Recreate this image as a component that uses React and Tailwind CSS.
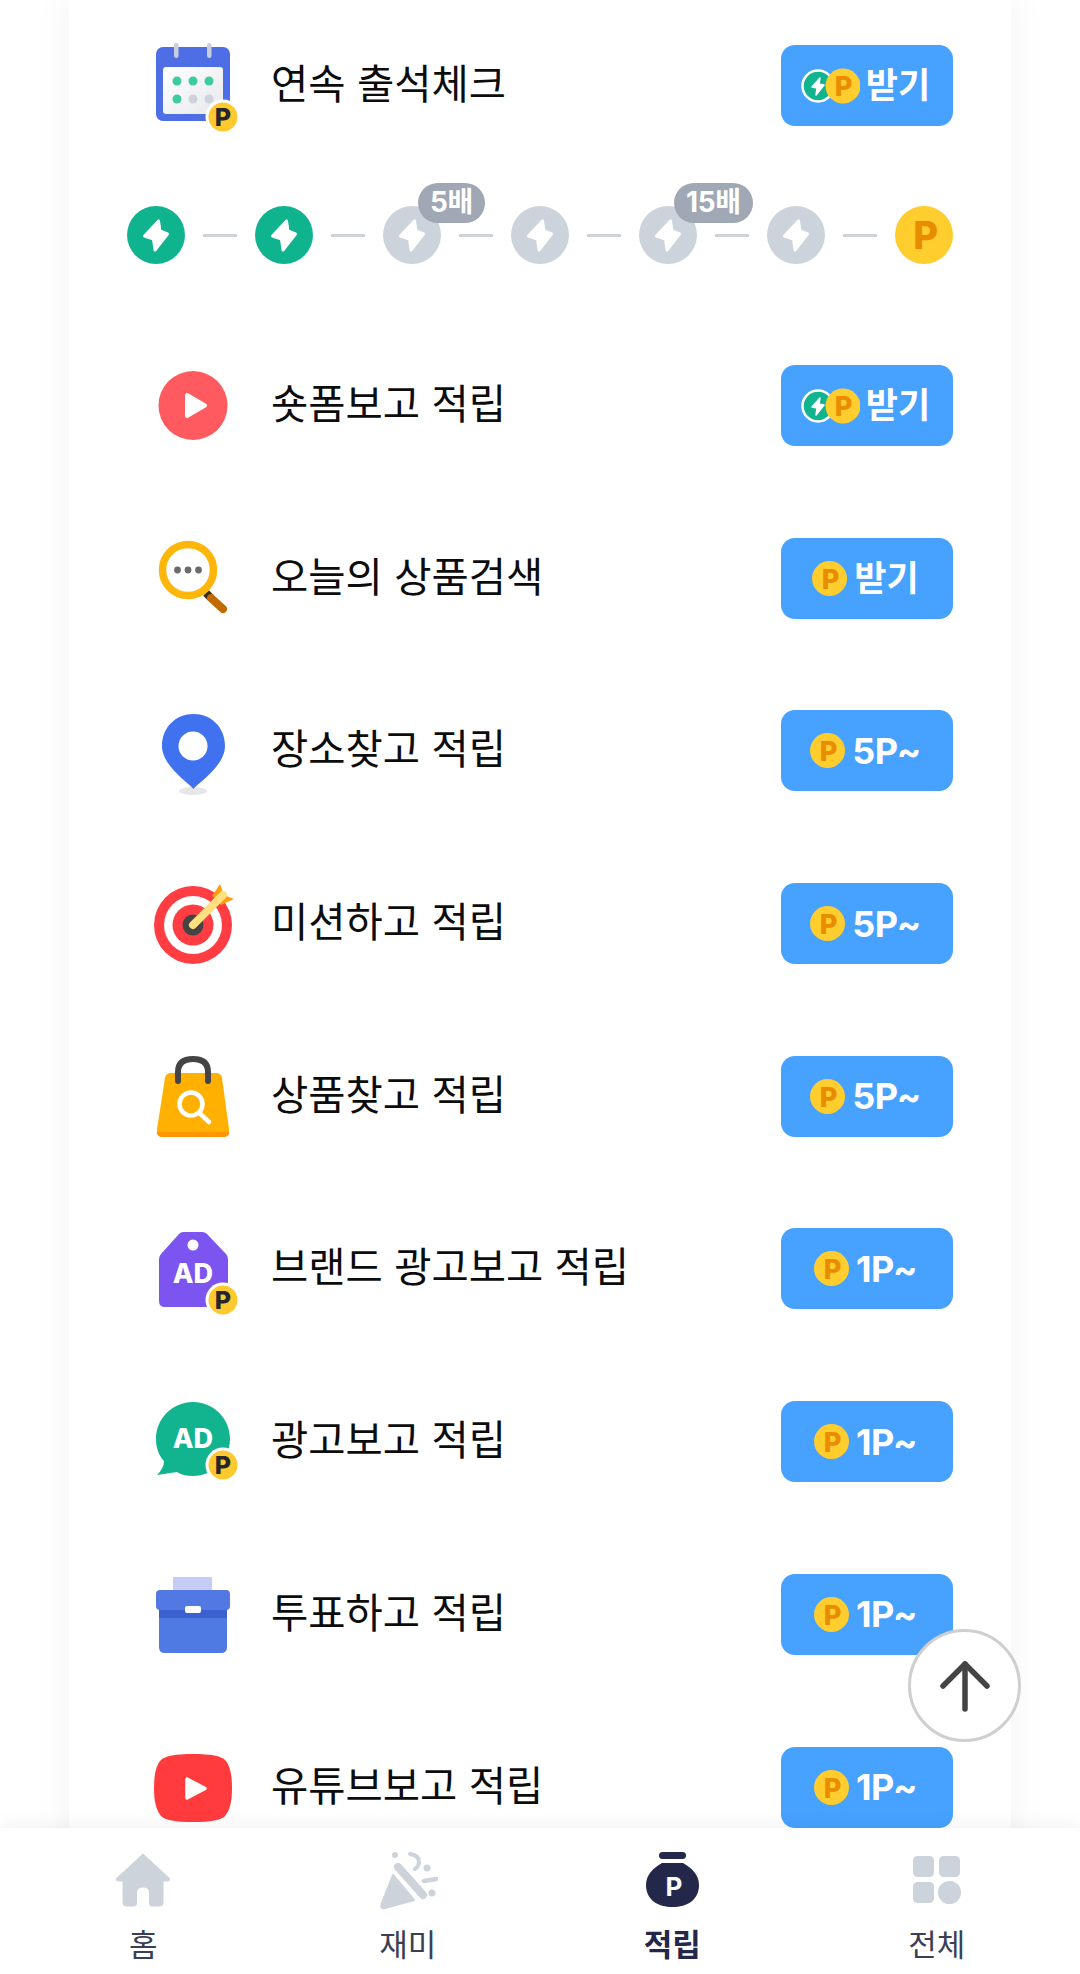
// 적립 탭: 적립 미션 목록 + 하단 내비게이션
import React from 'react';

const BOLT = '31.5,15 17.5,30 26.5,33 28,44 40.5,28 33,25';

const Coin = ({ size = 35, pSize = 27, baseline = 27.5 }) => (
    <svg width={size} height={size} viewBox="0 0 35 35" className="shrink-0">
        <circle cx="17.5" cy="17.5" r="17.5" fill="#ffcd2e" />
        <text x="18.5" y={baseline} textAnchor="middle" fontSize={pSize} fontWeight="800" fontFamily="Inter" fill="#e88c00">P</text>
    </svg>
);

const DoubleCoin = () => (
    <svg width="59" height="36" viewBox="0 0 59 36" className="shrink-0">
        <circle cx="17" cy="18" r="15.5" fill="#12b48f" stroke="#fff" strokeWidth="2.5" />
        <polygon points="19,10 11,19 16,20 15,27 23,17 18,16" fill="#fff" stroke="#fff" strokeWidth="1.5" strokeLinejoin="round" />
        <circle cx="42" cy="18" r="17.5" fill="#ffcd2e" />
        <text x="42.5" y="28" textAnchor="middle" fontSize="27" fontWeight="800" fontFamily="Inter" fill="#e88c00">P</text>
    </svg>
);

// 아이콘 우측 하단의 포인트 뱃지
const PBadge = ({ cx = 70, cy = 71 }) => (
    <g>
        <circle cx={cx} cy={cy} r="17.5" fill="#fff" />
        <circle cx={cx} cy={cy} r="14.5" fill="#fdc92f" />
        <text x={cx} y={cy + 9} textAnchor="middle" fontSize="25" fontWeight="800" fontFamily="Inter" fill="#26262e">P</text>
    </g>
);

const Svg = ({ children }) => (
    <svg width="80" height="80" viewBox="0 0 80 80" className="shrink-0 overflow-visible">{children}</svg>
);

const CalendarIcon = () => (
    <Svg>
        <defs>
            <linearGradient id="calPaper" x1="0" y1="0" x2="1" y2="1">
                <stop offset="0" stopColor="#ffffff" />
                <stop offset="1" stopColor="#e6e8ec" />
            </linearGradient>
        </defs>
        <rect x="3" y="1" width="74" height="74" rx="7" fill="#4e6ee6" />
        <rect x="10" y="21" width="60" height="47" rx="3" fill="url(#calPaper)" />
        <rect x="21" y="-3" width="4.5" height="15" rx="2.2" fill="#c8cede" />
        <rect x="54" y="-3" width="4.5" height="15" rx="2.2" fill="#c8cede" />
        <circle cx="24" cy="35" r="4.5" fill="#3ecba0" />
        <circle cx="40" cy="35" r="4.5" fill="#3ecba0" />
        <circle cx="56" cy="35" r="4.5" fill="#3ecba0" />
        <circle cx="24" cy="53" r="4.5" fill="#3ecba0" />
        <circle cx="40" cy="53" r="4.5" fill="#cdd3db" />
        <circle cx="56" cy="53" r="4.5" fill="#cdd3db" />
        <PBadge />
    </Svg>
);

const PlayIcon = () => (
    <Svg>
        <circle cx="40" cy="39.5" r="34.5" fill="#ff5a5f" />
        <path d="M34 29 L52 39.5 L34 50 Z" fill="#fff" stroke="#fff" strokeWidth="4" strokeLinejoin="round" />
    </Svg>
);

const SearchDotsIcon = () => (
    <Svg>
        <path d="M53 55 L58 60" stroke="#3a2a10" strokeWidth="8" />
        <path d="M58 60 L70 71" stroke="#c06a00" strokeWidth="8" strokeLinecap="round" />
        <circle cx="35" cy="32" r="25.5" fill="#fff" stroke="#ffb60a" strokeWidth="7.5" />
        <circle cx="24.5" cy="32" r="3.4" fill="#6b6b6b" />
        <circle cx="35" cy="32" r="3.4" fill="#6b6b6b" />
        <circle cx="45.5" cy="32" r="3.4" fill="#6b6b6b" />
    </Svg>
);

const PinIcon = () => (
    <Svg>
        <ellipse cx="40" cy="80" rx="14" ry="4" fill="#e6e7ea" />
        <path d="M40.5 78 C37 73 9 55 9 35 C9 16 23 3 40.5 3 C58 3 72 16 72 35 C72 55 44 73 40.5 78 Z" fill="#4072f0" />
        <circle cx="40" cy="35" r="14.5" fill="#fff" />
    </Svg>
);

const TargetIcon = () => (
    <Svg>
        <circle cx="40" cy="41" r="39" fill="#ff3d43" />
        <circle cx="40" cy="41" r="29" fill="#fff" />
        <circle cx="40" cy="41" r="20.5" fill="#ff3d43" />
        <circle cx="40" cy="41" r="10.5" fill="#444" />
        <polygon points="67,0 59,12 68,21 81,15 71,11" fill="#ff9d0a" />
        <path d="M40 41 L70 11" stroke="#ffdf80" strokeWidth="8" strokeLinecap="round" />
    </Svg>
);

const BagIcon = () => (
    <Svg>
        <path d="M4 73 L12 22 Q13 17 18 17 L63 17 Q68 17 69 22 L76 73 Q77 81 70 81 L10 81 Q3 81 4 73 Z" fill="#ffb000" />
        <path d="M3.6 76 Q4 81 10 81 L70 81 Q76 81 76.4 76 Z" fill="#ff9500" />
        <path d="M25 25 L25 16 Q25 3 40 3 Q55 3 55 16 L55 25" fill="none" stroke="#444" strokeWidth="6" strokeLinecap="round" />
        <circle cx="38" cy="48" r="11.5" fill="none" stroke="#fff" strokeWidth="4.5" />
        <path d="M46.5 57 L56 66" stroke="#fff" strokeWidth="4.5" strokeLinecap="round" />
    </Svg>
);

const AdTagIcon = () => (
    <Svg>
        <path d="M30 3 L49 3 Q52 3 54 5 L73 25 Q75 27 75 30 L75 72 Q75 78 69 78 L12 78 Q6 78 6 72 L6 30 Q6 27 8 25 L26 5 Q28 3 30 3 Z" fill="#7c55f0" />
        <circle cx="40" cy="16" r="5.5" fill="#fff" />
        <text x="40" y="54" textAnchor="middle" fontSize="27" fontWeight="800" fontFamily="Inter" fill="#fff">AD</text>
        <PBadge />
    </Svg>
);

const AdBubbleIcon = () => (
    <Svg>
        <path d="M40 0 C60.5 0 77 16.5 77 37 C77 57.5 60.5 74 40 74 C34 74 29 73 24 70 L4 73 Q11 66 11 59 C5.5 53 3 45.5 3 37 C3 16.5 19.5 0 40 0 Z" fill="#12b48f" />
        <text x="40" y="46" textAnchor="middle" fontSize="27" fontWeight="800" fontFamily="Inter" fill="#fff">AD</text>
        <PBadge cy={63} />
    </Svg>
);

const BoxIcon = () => (
    <Svg>
        <rect x="20" y="3" width="39" height="14" fill="#c5cdf5" />
        <path d="M6 33 H74 V73 Q74 79 68 79 H12 Q6 79 6 73 Z" fill="#4f79e3" />
        <rect x="6" y="33" width="68" height="11" fill="#3d60d0" />
        <rect x="3" y="16" width="74" height="20" rx="4" fill="#5278e4" />
        <rect x="32" y="32" width="16" height="7" rx="2" fill="#fff" />
    </Svg>
);

const YoutubeIcon = () => (
    <Svg>
        <path d="M40 7 C58 7 68 9 72 13 C77 18 79 28 79 41 C79 54 77 63 72 69 C68 73 58 75 40 75 C22 75 12 73 8 69 C3 63 1 54 1 41 C1 28 3 18 8 13 C12 9 22 7 40 7 Z" fill="#ff3b3e" />
        <path d="M34 32 L52 41.5 L34 51 Z" fill="#fff" stroke="#fff" strokeWidth="3.5" strokeLinejoin="round" />
    </Svg>
);

const MISSIONS = [
    { title: '숏폼보고 적립', Icon: PlayIcon, reward: 'double' },
    { title: '오늘의 상품검색', Icon: SearchDotsIcon, reward: '받기' },
    { title: '장소찾고 적립', Icon: PinIcon, reward: '5P~' },
    { title: '미션하고 적립', Icon: TargetIcon, reward: '5P~' },
    { title: '상품찾고 적립', Icon: BagIcon, reward: '5P~' },
    { title: '브랜드 광고보고 적립', Icon: AdTagIcon, reward: '1P~' },
    { title: '광고보고 적립', Icon: AdBubbleIcon, reward: '1P~' },
    { title: '투표하고 적립', Icon: BoxIcon, reward: '1P~' },
    { title: '유튜브보고 적립', Icon: YoutubeIcon, reward: '1P~' },
];

const RewardButton = ({ reward }) => (
    <button className="w-[172px] h-[81px] shrink-0 rounded-[14px] bg-[#46a1ff] text-white flex items-center justify-center">
        {reward === 'double' && (
            <span className="flex items-center gap-[6px] pr-[3px]">
                <DoubleCoin />
                <span className="text-[35px] font-semibold leading-none">받기</span>
            </span>
        )}
        {reward === '받기' && (
            <span className="flex items-center gap-[7px] pr-[3px]">
                <Coin />
                <span className="text-[35px] font-semibold leading-none">받기</span>
            </span>
        )}
        {reward !== 'double' && reward !== '받기' && (
            <span className="flex items-center gap-[7px] pr-[3px]">
                <Coin />
                <span className="text-[36px] font-bold leading-none tracking-[-0.5px]">{reward}</span>
            </span>
        )}
    </button>
);

const MissionRow = ({ title, Icon, reward }) => (
    <div className="flex items-center h-[81px]">
        <div className="ml-[26px] mr-[38px] w-[80px] h-[80px] shrink-0">
            <Icon />
        </div>
        <span className="flex-1 pb-[1px] text-[40.5px] leading-[52px] text-[#0c0c0c] whitespace-nowrap">{title}</span>
        <RewardButton reward={reward} />
    </div>
);

const StreakDot = ({ active, badge }) => (
    <div className="relative w-[58px] h-[58px] shrink-0">
        <svg width="58" height="58" viewBox="0 0 58 58">
            <circle cx="29" cy="29" r="29" fill={active ? '#0fb38e' : '#cdd3db'} />
            <polygon points={BOLT} fill="#fff" stroke="#fff" strokeWidth="3" strokeLinejoin="round" />
        </svg>
        {badge && (
            <span className="absolute top-[-23px] left-[35px] h-[40px] px-[12px] rounded-full bg-[#a0a7b5] text-white text-[28px] font-bold leading-[38px] tracking-[-0.3px] whitespace-nowrap">
                {badge}
            </span>
        )}
    </div>
);

const StreakLine = () => <div className="w-[34px] h-[3px] shrink-0 bg-[#cfd3d9]" />;

const StreakBar = () => (
    <div className="flex items-center justify-between h-[58px] mt-[80px] mb-[101px]">
        <StreakDot active />
        <StreakLine />
        <StreakDot active />
        <StreakLine />
        <StreakDot badge="5배" />
        <StreakLine />
        <StreakDot />
        <StreakLine />
        <StreakDot badge="15배" />
        <StreakLine />
        <StreakDot />
        <StreakLine />
        <Coin size={58} pSize={23} baseline={26} />
    </div>
);

const HomeNavIcon = () => (
    <svg width="60" height="60" viewBox="0 0 60 60">
        <path d="M30 4 L56 28 Q58 31 54 31 L50 31 L50 53 Q50 56 47 56 L39 56 Q36.5 56 36.5 54 L36.5 43 Q36.5 37 30 37 Q23.5 37 23.5 43 L23.5 54 Q23.5 56 21 56 L13 56 Q10 56 10 53 L10 31 L6 31 Q2 31 4 28 Z" fill="#cdd3db" stroke="#cdd3db" strokeWidth="1" strokeLinejoin="round" />
    </svg>
);

const FunNavIcon = () => (
    <svg width="60" height="60" viewBox="0 0 60 60" fill="#cdd3db" stroke="none">
        <path d="M15 25 L36 50 L7 58 Q2 59 3.5 54 Z" stroke="#cdd3db" strokeWidth="2" strokeLinejoin="round" />
        <path d="M20 17 L45 45" stroke="#cdd3db" strokeWidth="8" strokeLinecap="round" />
        <circle cx="17" cy="5" r="3" />
        <circle cx="49" cy="18" r="3.5" />
        <circle cx="54" cy="43" r="3.5" />
        <path d="M46 31 L58 29" stroke="#cdd3db" strokeWidth="4.5" strokeLinecap="round" />
        <path d="M32 4 Q41 5 41 12 Q41 16 37 19" fill="none" stroke="#cdd3db" strokeWidth="4" strokeLinecap="round" />
    </svg>
);

const PointNavIcon = () => (
    <svg width="60" height="60" viewBox="0 0 60 60">
        <rect x="17" y="2" width="27" height="7" rx="3.5" fill="#23274a" />
        <path d="M20 13 L41 13 C50 18 57 25 57 35 C57 50 45 57 30.5 57 C16 57 4 50 4 35 C4 25 11 18 20 13 Z" fill="#23274a" />
        <text x="32" y="45.5" textAnchor="middle" fontSize="26" fontWeight="700" fontFamily="Inter" fill="#fff">P</text>
    </svg>
);

const AllNavIcon = () => (
    <svg width="60" height="60" viewBox="0 0 60 60" fill="#cdd3db">
        <rect x="6" y="6" width="21" height="21" rx="4.5" />
        <rect x="32" y="6" width="21" height="21" rx="4.5" />
        <rect x="6" y="32" width="21" height="21" rx="4.5" />
        <circle cx="42.5" cy="42.5" r="11.5" />
    </svg>
);

const NAV_ITEMS = [
    { label: '홈', Icon: HomeNavIcon },
    { label: '재미', Icon: FunNavIcon },
    { label: '적립', Icon: PointNavIcon, active: true },
    { label: '전체', Icon: AllNavIcon },
];

const BottomNav = () => (
    <nav className="relative z-10 h-[146px] shrink-0 bg-white px-[11px] grid grid-cols-4 shadow-[0_-4px_16px_rgba(0,0,0,0.05)]">
        {NAV_ITEMS.map(({ label, Icon, active }) => (
            <div key={label} className="flex flex-col items-center pt-[22px]">
                <Icon />
                <span className={`mt-[17px] text-[31px] leading-[36px] ${active ? 'font-bold text-[#23274a]' : 'text-[#3a3f55]'}`}>
                    {label}
                </span>
            </div>
        ))}
    </nav>
);

export default function App() {
    return (
        <div className="relative w-full h-[1974px] flex flex-col overflow-hidden bg-white font-['Inter','Noto_Sans_CJK_KR',sans-serif]">
            <main className="flex-1 min-h-0 overflow-hidden px-[69px]">
                <div className="-mt-[20px] pt-[65px] pb-[40px] px-[58px] bg-white rounded-[26px] shadow-[0_0_40px_rgba(0,0,0,0.05)]">
                    <div className="flex items-center h-[81px]">
                        <div className="ml-[26px] mr-[38px] w-[80px] h-[80px] shrink-0">
                            <CalendarIcon />
                        </div>
                        <span className="flex-1 pb-[1px] text-[40.5px] leading-[52px] text-[#0c0c0c] whitespace-nowrap">연속 출석체크</span>
                        <RewardButton reward="double" />
                    </div>
                    <StreakBar />
                    <div className="flex flex-col gap-[91.7px]">
                        {MISSIONS.map((m) => (
                            <MissionRow key={m.title} {...m} />
                        ))}
                    </div>
                </div>
            </main>
            <BottomNav />
            {/* 맨 위로 버튼 */}
            <button className="absolute z-20 right-[59px] bottom-[232px] w-[113px] h-[113px] rounded-full bg-white border-[3px] border-[#cfcfcf] flex items-center justify-center">
                <svg width="52" height="52" viewBox="0 0 52 52" fill="none" stroke="#444" strokeWidth="5.5" strokeLinecap="round" strokeLinejoin="round">
                    <path d="M26 4 L26 49" />
                    <path d="M4 26 L26 4 L48 26" />
                </svg>
            </button>
        </div>
    );
}
